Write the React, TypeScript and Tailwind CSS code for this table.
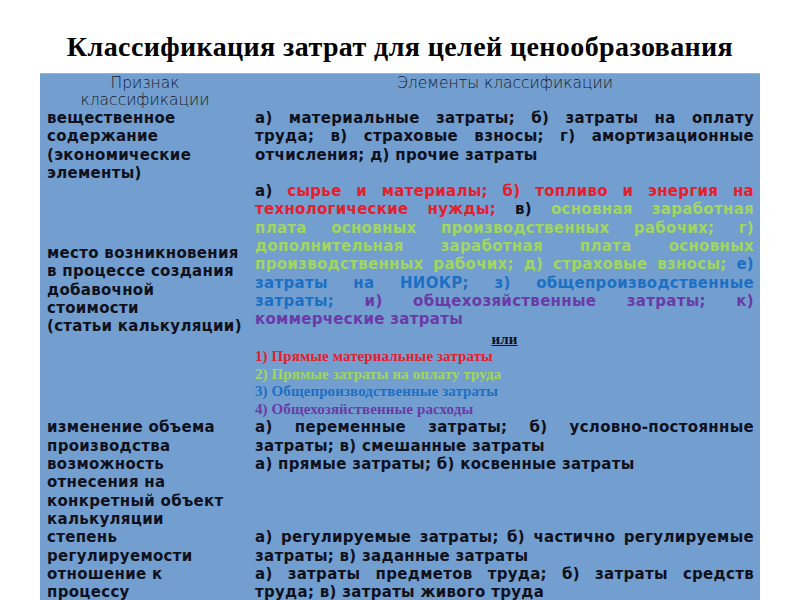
import React from "react";

const J = "text-justify [text-align-last:justify]";

const RED = "text-[#e3202c]";
const GREEN = "text-[#a2d65e]";
const BLUE = "text-[#1d6fc4]";
const PURPLE = "text-[#6b3aa8]";

function Lines({ lines }: { lines: string[] }) {
  return (
    <>
      {lines.map((l, i) => (
        <div key={i} className="whitespace-nowrap">
          {l}
        </div>
      ))}
    </>
  );
}

function JLines({ lines }: { lines: string[] }) {
  return (
    <>
      {lines.map((l, i) => (
        <div key={i} className={i < lines.length - 1 ? J : ""}>
          {l}
        </div>
      ))}
    </>
  );
}

export default function App() {
  return (
    <div className="w-[800px] h-[600px] bg-white overflow-hidden">
      <div className="h-[73px] pt-[33px]">
        <h1 className="text-center font-bold text-[28px] leading-[28px] tracking-[0.4px] text-black [font-family:'Liberation_Serif',serif]">
          Классификация затрат для целей ценообразования
        </h1>
      </div>
      <div className="mx-[40px] bg-[#729fcf] border-t border-[#8fb4dc] text-[#10111c] [font-family:'DejaVu_Sans',sans-serif]">
        <div className="grid grid-cols-[210px_1fr] h-[35px]">
          <div className="text-center font-extralight text-[15.5px] leading-[17px] pt-[1px] text-[#161925]">
            <div>Признак</div>
            <div>классификации</div>
          </div>
          <div className="text-center font-extralight text-[15.5px] leading-[17px] pt-[1px] text-[#161925]">
            Элементы классификации
          </div>
        </div>

        <div className="grid grid-cols-[210px_1fr] text-[15px] leading-[18.3px] font-bold tracking-[0.3px]">
          {/* Row 1 */}
          <div className="pl-[7px]">
            <Lines lines={["вещественное", "содержание", "(экономические", "элементы)"]} />
          </div>
          <div className="pl-[5px] pr-[6px]">
            <JLines
              lines={[
                "а) материальные затраты; б) затраты на оплату",
                "труда; в) страховые взносы; г) амортизационные",
                "отчисления; д) прочие затраты",
              ]}
            />
          </div>

          {/* Row 2 */}
          <div className="pl-[7px] pt-[62px]">
            <Lines
              lines={[
                "место возникновения",
                "в процессе создания",
                "добавочной",
                "стоимости",
                "(статьи калькуляции)",
              ]}
            />
          </div>
          <div className="pl-[5px] pr-[6px]">
            <div className={J}>
              а) <span className={RED}>сырье и материалы; б) топливо и энергия на</span>
            </div>
            <div className={J}>
              <span className={RED}>технологические нужды;</span> в){" "}
              <span className={GREEN}>основная заработная</span>
            </div>
            <div className={`${J} ${GREEN}`}>плата основных производственных рабочих; г)</div>
            <div className={`${J} ${GREEN}`}>дополнительная заработная плата основных</div>
            <div className={J}>
              <span className={GREEN}>производственных рабочих; д) страховые взносы;</span>{" "}
              <span className={BLUE}>е)</span>
            </div>
            <div className={`${J} ${BLUE}`}>затраты на НИОКР; з) общепроизводственные</div>
            <div className={J}>
              <span className={BLUE}>затраты;</span>{" "}
              <span className={PURPLE}>и) общехозяйственные затраты; к)</span>
            </div>
            <div className={PURPLE}>коммерческие затраты</div>
            <div className="[font-family:'Liberation_Serif',serif] font-bold text-[15px] tracking-[0.1px]">
              <div className="text-center leading-[18.5px] pt-[1px]">
                <span className="underline">или</span>
              </div>
              <div className="leading-[17.6px] whitespace-nowrap">
                <div className={RED}>1) Прямые материальные затраты</div>
                <div className={GREEN}>2) Прямые затраты на оплату труда</div>
                <div className={BLUE}>3) Общепроизводственные затраты</div>
                <div className={PURPLE}>4) Общехозяйственные расходы</div>
              </div>
            </div>
          </div>

          {/* Row 3 */}
          <div className="pl-[7px]">
            <Lines lines={["изменение объема", "производства"]} />
          </div>
          <div className="pl-[5px] pr-[6px]">
            <JLines
              lines={["а) переменные затраты; б) условно-постоянные", "затраты; в) смешанные затраты"]}
            />
          </div>

          {/* Row 4 */}
          <div className="pl-[7px]">
            <Lines lines={["возможность", "отнесения на", "конкретный объект", "калькуляции"]} />
          </div>
          <div className="pl-[5px] pr-[6px]">
            <JLines lines={["а) прямые затраты; б) косвенные затраты"]} />
          </div>

          {/* Row 5 */}
          <div className="pl-[7px]">
            <Lines lines={["степень", "регулируемости"]} />
          </div>
          <div className="pl-[5px] pr-[6px]">
            <JLines
              lines={[
                "а) регулируемые затраты; б) частично регулируемые",
                "затраты; в) заданные затраты",
              ]}
            />
          </div>

          {/* Row 6 */}
          <div className="pl-[7px]">
            <Lines lines={["отношение к", "процессу"]} />
          </div>
          <div className="pl-[5px] pr-[6px]">
            <JLines
              lines={["а) затраты предметов труда; б) затраты средств", "труда; в) затраты живого труда"]}
            />
          </div>
        </div>
      </div>
    </div>
  );
}
